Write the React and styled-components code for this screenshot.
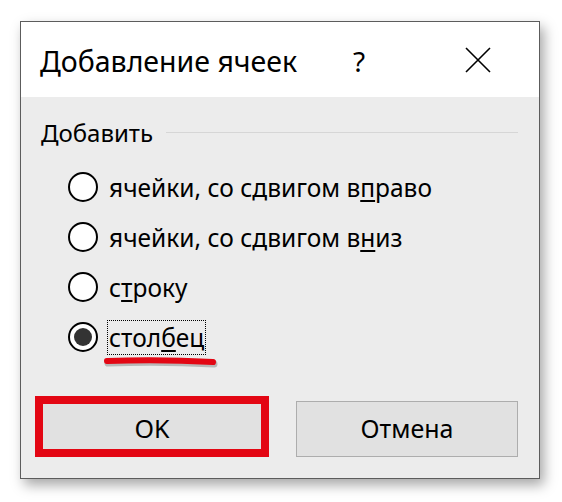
import React from "react";
import styled, { createGlobalStyle } from "styled-components";

const Global = createGlobalStyle`
  html, body { margin: 0; padding: 0; background: #ffffff; }
  body { font-family: "Noto Sans", "Open Sans", sans-serif; color: #000; }
`;

const Page = styled.div`
  width: 562px;
  height: 502px;
  padding: 21px 0 0 20px;
  box-sizing: border-box;
`;

const Dialog = styled.div`
  width: 520px;
  height: 458px;
  box-sizing: border-box;
  border: 1px solid #5c5c5c;
  background: #ececec;
  box-shadow: 4px 6px 12px rgba(0, 0, 0, 0.35);
  display: flex;
  flex-direction: column;
`;

const TitleBar = styled.div`
  height: 75px;
  background: #ffffff;
  display: flex;
  align-items: center;
  padding-left: 19px;
  flex-shrink: 0;
`;

const Title = styled.div`
  font-size: 28.5px;
  flex: 1;
  padding-top: 2px;
`;

const Help = styled.div`
  font-size: 28px;
  width: 20px;
  margin-right: 92px;
  padding-top: 2px;
`;

const Close = styled.div`
  width: 26px;
  height: 26px;
  margin-right: 48px;
  display: flex;
`;

const Body = styled.div`
  flex: 1;
  padding: 19px 21px 0 20px;
  display: flex;
  flex-direction: column;
`;

const GroupHeader = styled.div`
  display: flex;
  align-items: center;
  gap: 13px;
  font-size: 24px;
  height: 32px;
`;

const GroupLine = styled.div`
  flex: 1;
  height: 1px;
  background: #d6d6d6;
`;

const Options = styled.div`
  display: flex;
  flex-direction: column;
  padding: 22px 0 0 27px;
  gap: 16px;
`;

const Row = styled.label`
  display: flex;
  align-items: center;
  height: 34px;
  gap: 9px;
  font-size: 24.5px;
`;

const Circle = styled.span`
  width: 30px;
  height: 30px;
  box-sizing: border-box;
  border: 2px solid #000;
  border-radius: 50%;
  background: #fff;
  display: flex;
  align-items: center;
  justify-content: center;
  flex-shrink: 0;
`;

const Dot = styled.span`
  width: 18px;
  height: 18px;
  border-radius: 50%;
  background: #333;
`;

const LabelText = styled.span`
  position: relative;
  padding: 0 1px;
  border: 1px dotted ${(p) => (p.$focus ? "#000" : "transparent")};
  line-height: 33px;
`;

const Key = styled.span`
  text-decoration: underline;
  text-underline-offset: 3px;
  text-decoration-thickness: 1.5px;
`;

const RedStroke = styled.svg`
  position: absolute;
  left: -4px;
  top: 35px;
  overflow: visible;
`;

const Buttons = styled.div`
  margin-top: auto;
  margin-bottom: 21px;
  display: flex;
  gap: 33px;
`;

const ButtonWrap = styled.div`
  position: relative;
`;

const Button = styled.button`
  width: 222px;
  height: 56px;
  box-sizing: border-box;
  border: 1px solid #adadad;
  background: #e1e1e1;
  font-family: "Noto Sans", "Open Sans", sans-serif;
  font-size: 25px;
  color: #000;
  padding: 0 0 2px;
`;

const RedFrame = styled.div`
  position: absolute;
  left: -6px;
  top: -5px;
  width: 234px;
  height: 61px;
  box-sizing: border-box;
  border: 8px solid #e30613;
  pointer-events: none;
`;

const options = [
  { pre: "ячейки, со сдвигом в", key: "п", post: "раво" },
  { pre: "ячейки, со сдвигом в", key: "н", post: "из" },
  { pre: "с", key: "т", post: "року" },
  { pre: "стол", key: "б", post: "ец", checked: true },
];

export default function App() {
  return (
    <>
      <Global />
      <Page>
        <Dialog>
          <TitleBar>
            <Title>Добавление ячеек</Title>
            <Help>?</Help>
            <Close>
              <svg width="26" height="26" viewBox="0 0 26 26">
                <path d="M1 1 L25 25 M25 1 L1 25" stroke="#000" strokeWidth="1.6" fill="none" />
              </svg>
            </Close>
          </TitleBar>
          <Body>
            <GroupHeader>
              <span>Добавить</span>
              <GroupLine />
            </GroupHeader>
            <Options>
              {options.map((o, i) => (
                <Row key={i}>
                  <Circle>{o.checked && <Dot />}</Circle>
                  <LabelText $focus={o.checked}>
                    {o.pre}
                    <Key>{o.key}</Key>
                    {o.post}
                    {o.checked && (
                      <RedStroke width="112" height="10" viewBox="0 0 112 10">
                        <path
                          d="M3 5 Q56 3 109 6"
                          stroke="rgba(0,0,0,0.22)"
                          strokeWidth="7"
                          strokeLinecap="round"
                          fill="none"
                          transform="translate(1 2)"
                        />
                        <path
                          d="M3 5 Q56 3 109 6"
                          stroke="#e30613"
                          strokeWidth="6"
                          strokeLinecap="round"
                          fill="none"
                        />
                      </RedStroke>
                    )}
                  </LabelText>
                </Row>
              ))}
            </Options>
            <Buttons>
              <ButtonWrap>
                <Button>OK</Button>
                <RedFrame />
              </ButtonWrap>
              <ButtonWrap>
                <Button>Отмена</Button>
              </ButtonWrap>
            </Buttons>
          </Body>
        </Dialog>
      </Page>
    </>
  );
}
